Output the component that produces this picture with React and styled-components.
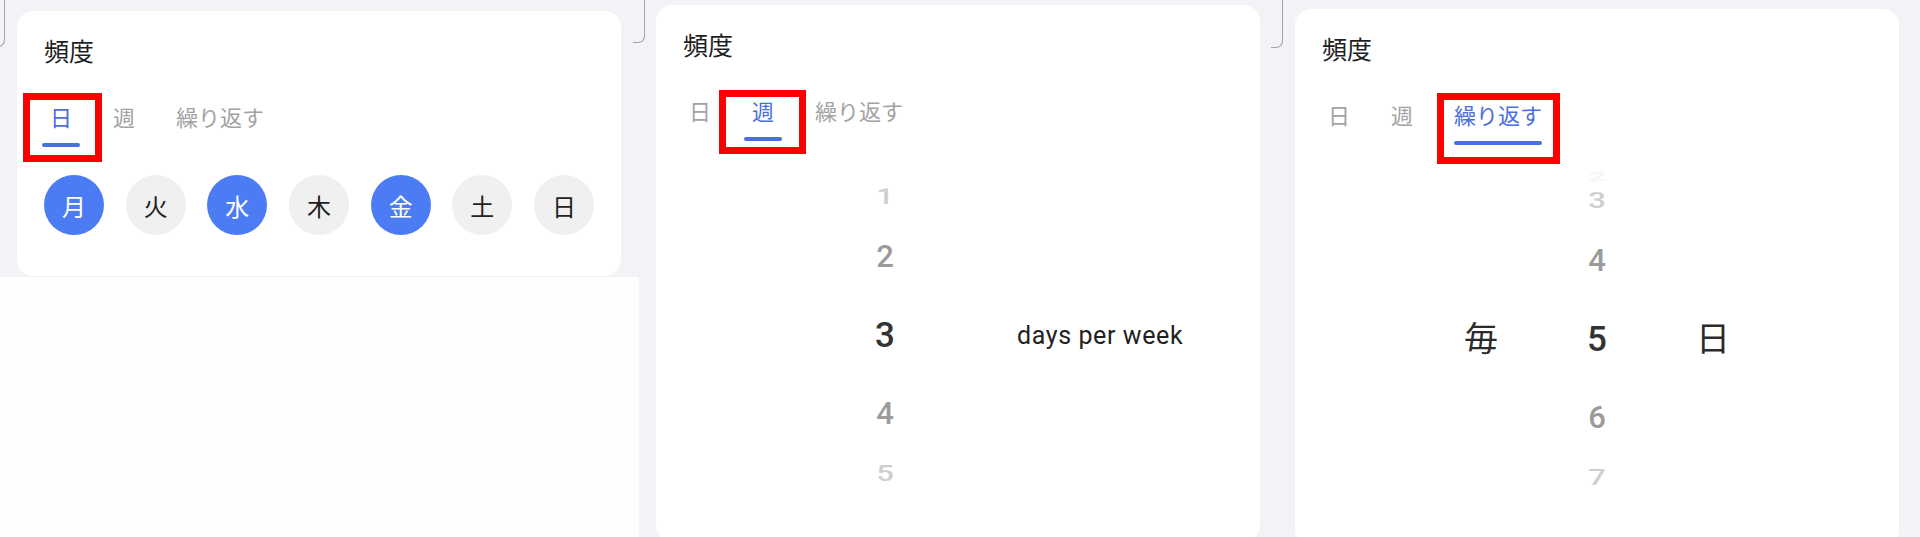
import React from 'react'
import styled, { createGlobalStyle } from 'styled-components'

const GlobalStyle = createGlobalStyle`
  html, body {
    margin: 0;
    padding: 0;
    background: #f2f3f7;
  }
  body {
    font-family: Roboto, "Noto Sans CJK JP", sans-serif;
  }
`

const TABS = ['日', '週', '繰り返す']
const DAYS = [
  { label: '月', on: true },
  { label: '火', on: false },
  { label: '水', on: true },
  { label: '木', on: false },
  { label: '金', on: true },
  { label: '土', on: false },
  { label: '日', on: false },
]

// wheel rows: distance from the selected row -> height, tone, squash
const ROW_H = [78, 79, 41, 7]
const ROW_TONE = ['#333333', '#9b9b9b', '#cfcfcf', '#f4f4f4']
const ROW_SQUASH = [1, 1, 0.72, 0.4]

const Strip = styled.div`
  display: flex;
  width: 1920px;
  height: 537px;
  overflow: hidden;
  background: #f2f3f7;
`

const Panel = styled.section`
  position: relative;
  display: flex;
  flex-direction: column;
  width: 640px;
  height: 537px;
  box-sizing: border-box;
  padding-top: ${p => p.$top}px;
  padding-bottom: ${p => p.$bottom || 0}px;
  flex-shrink: 0;
`

// piece of the rounded frame that peeks in at the top of each capture
const FrameEdge = styled.div`
  position: absolute;
  top: -10px;
  left: ${p => p.$x}px;
  width: 12px;
  height: ${p => p.$h}px;
  box-sizing: border-box;
  border-right: 1.5px solid #a4a4a4;
  border-bottom: 1.5px solid #a4a4a4;
  border-bottom-right-radius: 7px;
  z-index: 2;
`

const Card = styled.div`
  width: 604px;
  box-sizing: border-box;
  margin-left: ${p => p.$left}px;
  padding: 25px 27px 41px;
  background: #ffffff;
  border-radius: 16px;
  flex: ${p => (p.$grow ? 1 : 'none')};
`

const Sheet = styled.div`
  flex: 1;
  width: 639px;
  margin-top: 1px;
  background: #fefefe;
`

const BottomStrip = styled.div`
  height: 7px;
  margin-top: auto;
  background: #ffffff;
`

const Title = styled.h2`
  margin: 0;
  font-size: 25px;
  font-weight: 400;
  line-height: 34px;
  color: #1f1f1f;
`

const TabRow = styled.div`
  display: flex;
  gap: 41px;
  margin: 34px 0 0 6px;
`

const Tab = styled.div`
  position: relative;
  display: inline-flex;
  flex-direction: column;
  font-size: 22px;
  line-height: 30px;
  color: ${p => (p.$active ? '#4a6fdc' : '#a3a3a3')};
`

const Underline = styled.span`
  height: 4px;
  margin: 9px ${p => p.$bleed}px 0;
  border-radius: 2px;
  background: ${p => (p.$active ? '#4a6fe0' : 'transparent')};
`

const Highlight = styled.span`
  position: absolute;
  left: -${p => p.$l}px;
  right: -${p => p.$r}px;
  top: -${p => p.$t}px;
  bottom: -${p => p.$b}px;
  border: 7px solid #ff0000;
  pointer-events: none;
`

const DayRow = styled.div`
  display: flex;
  justify-content: space-between;
  margin-top: 28px;
`

const DayCircle = styled.div`
  display: flex;
  align-items: center;
  justify-content: center;
  width: 60px;
  height: 60px;
  border-radius: 50%;
  font-size: 24px;
  background: ${p => (p.$on ? '#4c7cf4' : '#f0f0f0')};
  color: ${p => (p.$on ? '#ffffff' : '#222222')};
`

const Picker = styled.div`
  display: flex;
  align-items: center;
  gap: ${p => p.$gap}px;
  margin-top: 28px;
  padding-left: ${p => p.$indent}px;
`

const Wheel = styled.div`
  display: flex;
  flex-direction: column;
  width: 80px;
`

const WheelRow = styled.div`
  display: flex;
  align-items: center;
  justify-content: center;
  height: ${p => ROW_H[p.$d]}px;
  font-size: ${p => (p.$d === 0 ? 35 : 31)}px;
  font-weight: 500;
  line-height: 1;
  color: ${p => ROW_TONE[p.$d]};
  transform: scaleY(${p => ROW_SQUASH[p.$d]});
`

const SideLabel = styled.div`
  width: 80px;
  text-align: center;
  font-size: 34px;
  line-height: 1;
  color: #2b2b2b;
`

const Unit = styled.div`
  font-size: 25px;
  letter-spacing: 0.6px;
  color: #222222;
`

const Tabs = ({ active, box }) => (
  <TabRow>
    {TABS.map((t, i) => (
      <Tab key={t} $active={i === active}>
        {t}
        <Underline $active={i === active} $bleed={t.length === 1 ? -8 : 0} />
        {i === active && <Highlight $l={box[0]} $r={box[1]} $t={box[2]} $b={box[3]} />}
      </Tab>
    ))}
  </TabRow>
)

const NumberWheel = ({ rows }) => (
  <Wheel>
    {rows.map(([v, d], i) => (
      <WheelRow key={i} $d={d}>{v}</WheelRow>
    ))}
  </Wheel>
)

export default function App() {
  return (
    <>
      <GlobalStyle />
      <Strip>
        <Panel $top={11}>
          <FrameEdge $x={-7} $h={57} />
          <Card $left={17}>
            <Title>頻度</Title>
            <Tabs active={0} box={[27, 30, 11, 15]} />
            <DayRow>
              {DAYS.map(d => (
                <DayCircle key={d.label} $on={d.on}>{d.label}</DayCircle>
              ))}
            </DayRow>
          </Card>
          <Sheet />
        </Panel>

        <Panel $top={5}>
          <FrameEdge $x={-7} $h={53} />
          <Card $left={16} $grow>
            <Title>頻度</Title>
            <Tabs active={1} box={[33, 32, 8, 13]} />
            <Picker $indent={162} $gap={92}>
              <NumberWheel
                rows={[['', 3], ['1', 2], ['2', 1], ['3', 0], ['4', 1], ['5', 2], ['', 3]]}
              />
              <Unit>days per week</Unit>
            </Picker>
          </Card>
          <BottomStrip />
        </Panel>

        <Panel $top={9} $bottom={7}>
          <FrameEdge $x={-9} $h={58} />
          <Card $left={15} $grow>
            <Title>頻度</Title>
            <Tabs active={2} box={[17, 18, 9, 19]} />
            <Picker $indent={119} $gap={36}>
              <SideLabel>毎</SideLabel>
              <NumberWheel
                rows={[['2', 3], ['3', 2], ['4', 1], ['5', 0], ['6', 1], ['7', 2], ['', 3]]}
              />
              <SideLabel>日</SideLabel>
            </Picker>
          </Card>
        </Panel>
      </Strip>
    </>
  )
}
